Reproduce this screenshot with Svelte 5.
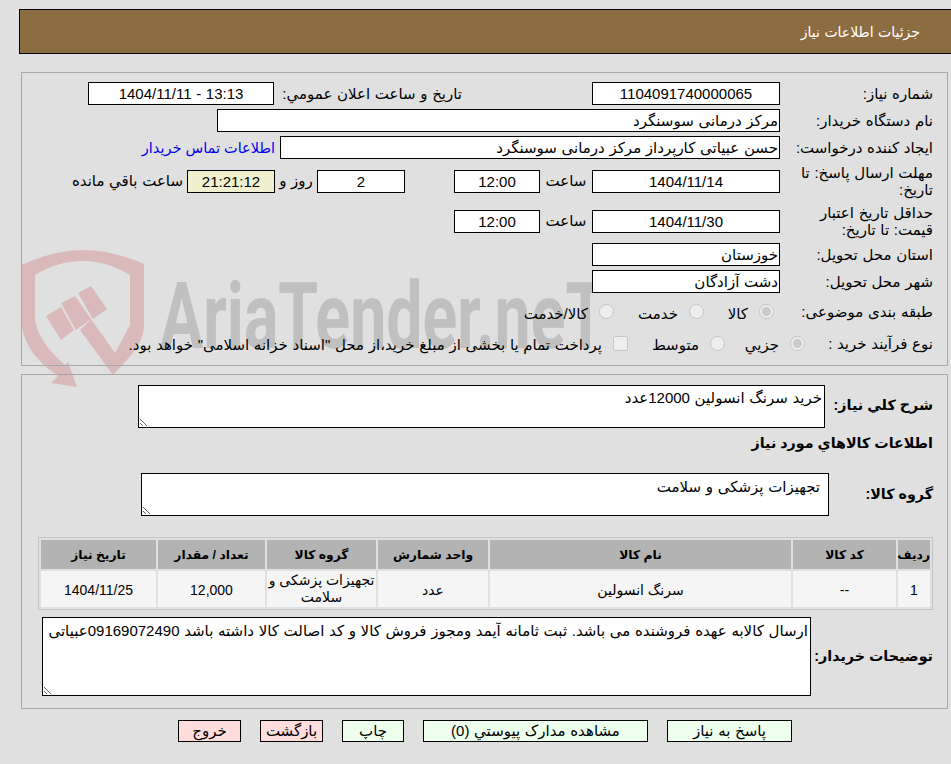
<script>
	const columns = ['ردیف', 'کد کالا', 'نام کالا', 'واحد شمارش', 'گروه کالا', 'تعداد / مقدار', 'تاریخ نیاز'];
	const items = [
		{ row: 1, code: '--', name: 'سرنگ انسولین', unit: 'عدد', group: 'تجهیزات پزشکی و سلامت', qty: '12,000', date: '1404/11/25' }
	];
	const notes = 'ارسال کالابه عهده فروشنده می باشد. ثبت ثامانه آیمد ومجوز فروش کالا و کد اصالت کالا داشته باشد 09169072490عبیاتی';
</script>

<div class="page" dir="rtl">
	<div class="watermark" aria-hidden="true">
		<svg class="shield" viewBox="0 0 160 150" width="160" height="150">
			<g transform="translate(0 -240)" fill="#d9b9ba">
				<path d="M21 265C40 257 60 250 83 250C105 250 125 256 144 264L144 327C143 345 125 362 113 375L80 330L91 319L115 353L130 325L130 275C115 266 100 261 83 261C65 261 50 266 35 275L35 318C36 335 50 352 65 365L68 362L77 387L51 383L58 376C38 362 22 345 21 318Z" />
				<path d="M46 316L61 307L74 330L61 340Z" />
				<path d="M61 303L75 296L91 319L76 330Z" />
				<path d="M78 293L91 286L107 309L93 319Z" />
			</g>
		</svg>
		<span class="brand" dir="ltr">AriaTender.neT</span>
	</div>

	<div class="title">جزئیات اطلاعات نیاز</div>

	<section class="panel top">
		<div class="row">
			<div class="label">شماره نیاز:</div>
			<div class="box date">1104091740000065</div>
			<div class="announce">تاریخ و ساعت اعلان عمومي:</div>
			<div class="box announce-box">13:13 - 1404/11/11</div>
		</div>
		<div class="row">
			<div class="label">نام دستگاه خریدار:</div>
			<div class="box text buyer">مرکز درمانی سوسنگرد</div>
		</div>
		<div class="row">
			<div class="label">ایجاد کننده درخواست:</div>
			<div class="box text creator">حسن عبیاتی کارپرداز مرکز درمانی سوسنگرد</div>
			<a class="contact" href="#contact">اطلاعات تماس خریدار</a>
		</div>
		<div class="row tall">
			<div class="label">مهلت ارسال پاسخ: تا تاریخ:</div>
			<div class="box date">1404/11/14</div>
			<div class="hour">ساعت</div>
			<div class="box time">12:00</div>
			<div class="box days">2</div>
			<div class="day-word">روز و</div>
			<div class="box left">21:21:12</div>
			<div class="left-word">ساعت باقي مانده</div>
		</div>
		<div class="row tall">
			<div class="label">حداقل تاریخ اعتبار قیمت: تا تاریخ:</div>
			<div class="box date">1404/11/30</div>
			<div class="hour">ساعت</div>
			<div class="box time">12:00</div>
		</div>
		<div class="row">
			<div class="label">استان محل تحویل:</div>
			<div class="box text date">خوزستان</div>
		</div>
		<div class="row">
			<div class="label">شهر محل تحویل:</div>
			<div class="box text date">دشت آزادگان</div>
		</div>
		<div class="row choice subject">
			<div class="label">طبقه بندی موضوعی:</div>
			<label class="opt first"><input type="radio" name="subject" checked disabled /><span>کالا</span></label>
			<label class="opt"><input type="radio" name="subject" disabled /><span>خدمت</span></label>
			<label class="opt"><input type="radio" name="subject" disabled /><span>کالا/خدمت</span></label>
		</div>
		<div class="row choice process">
			<div class="label">نوع فرآیند خرید :</div>
			<label class="opt partial"><input type="radio" name="process" checked disabled /><span>جزیي</span></label>
			<label class="opt medium"><input type="radio" name="process" disabled /><span>متوسط</span></label>
			<label class="opt"><input type="checkbox" disabled /><span>پرداخت تمام یا بخشی از مبلغ خرید،از محل "اسناد خزانه اسلامی" خواهد بود.</span></label>
		</div>
	</section>

	<section class="panel bottom">
		<div class="row summary">
			<div class="label strong">شرح کلي نياز:</div>
			<textarea readonly>خرید سرنگ انسولین 12000عدد</textarea>
		</div>
		<h3>اطلاعات کالاهاي مورد نياز</h3>
		<div class="row group">
			<div class="label strong">گروه کالا:</div>
			<textarea readonly>تجهیزات پزشکی و سلامت</textarea>
		</div>

		<table>
			<colgroup>
				<col style="width: 32px" />
				<col style="width: 103px" />
				<col style="width: 301px" />
				<col style="width: 110px" />
				<col style="width: 109px" />
				<col style="width: 107px" />
				<col style="width: 115px" />
			</colgroup>
			<thead>
				<tr>
					{#each columns as col}
						<th>{col}</th>
					{/each}
				</tr>
			</thead>
			<tbody>
				{#each items as item}
					<tr>
						<td>{item.row}</td>
						<td>{item.code}</td>
						<td>{item.name}</td>
						<td>{item.unit}</td>
						<td class="wrap">{item.group}</td>
						<td>{item.qty}</td>
						<td>{item.date}</td>
					</tr>
				{/each}
			</tbody>
		</table>

		<div class="row buyer-notes">
			<div class="label strong">توضیحات خریدار:</div>
			<textarea readonly>{notes}</textarea>
		</div>
	</section>

	<div class="actions">
		<button class="go reply">پاسخ به نیاز</button>
		<button class="go docs">مشاهده مدارک پیوستي (0)</button>
		<button class="go print">چاپ</button>
		<button class="stop">بازگشت</button>
		<button class="stop">خروج</button>
	</div>
</div>

<style>
	:global(body) {
		background: #e0e0e0;
	}

	.page {
		position: relative;
		height: 764px;
		overflow: hidden;
		font-family: "Liberation Sans", "DejaVu Sans", sans-serif;
		font-size: 15px;
		word-spacing: 0.5px;
		color: #000;
		box-sizing: border-box;
		padding-top: 9px;
	}

	.watermark {
		position: absolute;
		left: 0;
		top: 240px;
		width: 640px;
		height: 150px;
	}

	.shield {
		position: absolute;
		left: 0;
		top: 0;
	}

	.brand {
		position: absolute;
		left: 160px;
		top: 27px;
		font-family: Roboto, sans-serif;
		font-weight: 700;
		font-size: 92px;
		line-height: 100px;
		color: #c0c0c0;
		white-space: nowrap;
		transform: scaleX(0.7);
		transform-origin: left top;
	}

	.title {
		position: relative;
		margin-left: 19px;
		height: 45px;
		box-sizing: border-box;
		background: #8c6d42;
		border: 1px solid #000;
		border-right: none;
		color: #fff;
		line-height: 44px;
		padding-right: 31px;
		font-size: 14px;
		font-family: "DejaVu Sans", sans-serif;
		word-spacing: 0;
	}

	.panel {
		position: relative;
		margin-left: 21px;
		margin-right: 3px;
		border: 1px solid #a8a8a8;
		box-sizing: border-box;
		padding-right: 14px;
	}

	.top {
		margin-top: 18px;
		height: 294px;
		padding-top: 7px;
	}

	.bottom {
		margin-top: 8px;
		height: 335px;
		padding-top: 10px;
	}

	.row {
		display: flex;
		align-items: center;
		min-height: 27px;
	}

	.tall {
		min-height: 40px;
	}

	.label {
		width: 153px;
		flex: none;
		box-sizing: border-box;
		padding-left: 8px;
		line-height: 17px;
	}

	.strong {
		font-weight: 700;
		font-size: 14.3px;
		word-spacing: 0;
	}

	.box {
		height: 23px;
		box-sizing: border-box;
		border: 1px solid #000;
		background: #fff;
		line-height: 21px;
		text-align: center;
		flex: none;
		white-space: nowrap;
	}

	.text {
		text-align: right;
		padding-right: 1px;
	}

	.date {
		width: 188px;
	}

	.announce {
		margin-right: 130px;
		width: 188px;
		flex: none;
		white-space: nowrap;
	}

	.announce-box {
		width: 186px;
	}

	.buyer {
		width: 563px;
	}

	.creator {
		width: 500px;
	}

	.contact {
		margin-right: 5px;
		color: #0000ee;
		text-decoration: none;
		white-space: nowrap;
		font-size: 14.5px;
		word-spacing: 0;
	}

	.hour {
		width: 52px;
		flex: none;
		text-align: center;
	}

	.time {
		width: 86px;
	}

	.days {
		width: 88px;
		margin-right: 49px;
	}

	.day-word {
		width: 42px;
		flex: none;
		text-align: center;
	}

	.left {
		width: 88px;
		background: #f0f0d0;
	}

	.left-word {
		margin-right: 4px;
		white-space: nowrap;
	}

	.choice {
		min-height: 30px;
	}

	.subject {
		min-height: 33px;
	}

	.opt {
		display: flex;
		align-items: center;
		gap: 11px;
		white-space: nowrap;
	}

	.opt span {
		padding-top: 4px;
	}

	.opt input {
		width: 15px;
		height: 15px;
		margin: 0;
		flex: none;
	}

	.subject .opt {
		width: 90px;
	}

	.subject .opt.first {
		width: 70px;
		margin-right: 6px;
	}

	.partial {
		width: 80px;
		margin-right: -25px;
	}

	.medium {
		width: 97px;
	}

	.summary {
		align-items: flex-start;
	}

	.summary .label {
		width: 108px;
		padding-left: 0;
		padding-top: 12px;
	}

	textarea {
		border: 1px solid #000;
		border-radius: 0;
		background: #fff;
		padding: 3px 2px;
		margin: 0;
		box-sizing: border-box;
		font: inherit;
		word-spacing: inherit;
		color: #000;
		outline: none;
		display: block;
		flex: none;
	}

	.summary textarea {
		width: 687px;
		height: 43px;
	}

	h3 {
		margin: 0;
		height: 30px;
		line-height: 30px;
		font-size: 14.3px;
		font-weight: 700;
		word-spacing: 0;
	}

	.group {
		margin-top: 15px;
		padding-bottom: 21px;
	}

	.group .label {
		width: 104px;
		padding-left: 0;
	}

	.group textarea {
		width: 688px;
		height: 43px;
		padding: 4px 8px;
	}

	table {
		width: 895px;
		table-layout: fixed;
		border: 1px solid #c4c4c4;
		border-spacing: 2px;
		border-collapse: separate;
		text-align: center;
		font-size: 14px;
		word-spacing: 0;
	}

	th {
		height: 29px;
		padding: 0;
		background: #b3b3b3;
		font-size: 12.3px;
		font-weight: 700;
		white-space: nowrap;
	}

	td {
		height: 36px;
		padding: 2px 0 0;
		box-sizing: border-box;
		background: #f5f5f5;
	}

	.wrap {
		padding-top: 0;
		line-height: 17px;
	}

	.buyer-notes {
		margin-top: 7px;
	}

	.buyer-notes .label {
		width: 122px;
		padding-left: 0;
	}

	.buyer-notes textarea {
		width: 769px;
		height: 79px;
		padding-top: 4px;
	}

	.actions {
		display: flex;
		gap: 19px;
		margin-top: 11px;
		padding-right: 159px;
	}

	button {
		width: 63px;
		height: 22px;
		padding: 0;
		border: 1px solid #000;
		border-radius: 0;
		font: inherit;
		word-spacing: inherit;
		color: #000;
		flex: none;
	}

	.go {
		background: #eeffee;
	}

	.stop {
		background: #ffdddd;
	}

	.reply {
		width: 125px;
	}

	.docs {
		width: 225px;
	}

	.print {
		width: 62px;
	}
</style>
